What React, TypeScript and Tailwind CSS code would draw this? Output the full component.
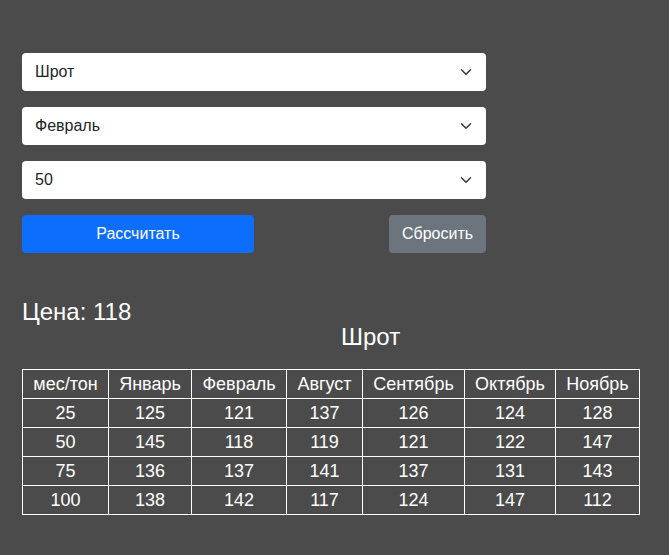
const rows = [
  ["25", "125", "121", "137", "126", "124", "128"],
  ["50", "145", "118", "119", "121", "122", "147"],
  ["75", "136", "137", "141", "137", "131", "143"],
  ["100", "138", "142", "117", "124", "147", "112"],
];

const head = ["мес/тон", "Январь", "Февраль", "Август", "Сентябрь", "Октябрь", "Ноябрь"];
const widths = ["w-[86px]", "w-[83px]", "w-[95px]", "w-[76px]", "w-[102px]", "w-[91px]", "w-[84px]"];

function Select({ value }: { value: string }) {
  return (
    <div className="relative flex h-[38px] w-[464px] items-center rounded-[4px] bg-white pl-[13px] text-[16px] text-[#212529]">
      {value}
      <svg
        className="absolute right-[12px] top-[13px]"
        width="16"
        height="12"
        viewBox="0 0 16 16"
        fill="none"
        stroke="#343a40"
        strokeWidth="2"
        strokeLinecap="round"
        strokeLinejoin="round"
      >
        <path d="m2 5 6 6 6-6" />
      </svg>
    </div>
  );
}

export default function App() {
  return (
    <div className="min-h-[555px] bg-[#4b4b4b] px-[22px] pt-[53px] text-white font-['Liberation_Sans',Arial,sans-serif]">
      <div className="flex flex-col gap-[16px]">
        <Select value="Шрот" />
        <Select value="Февраль" />
        <Select value="50" />
        <div className="flex w-[464px] justify-between">
          <button className="h-[38px] w-[232px] rounded-[4px] bg-[#0d6efd] text-[16px] text-white">
            Рассчитать
          </button>
          <button className="h-[38px] w-[97px] rounded-[4px] bg-[#6c757d] text-[16px] text-white">
            Сбросить
          </button>
        </div>
      </div>
      <div className="mt-[44px] text-[24px] leading-[29px]">Цена: 118</div>
      <div className="-mt-[4px] pl-[319px] text-[24px] leading-[29px]">Шрот</div>
      <table className="mt-[18px] border-collapse text-[18px] leading-[20px]">
        <thead>
          <tr>
            {head.map((h, i) => (
              <th key={h} className={`${widths[i]} h-[29px] border border-white p-0 text-center font-normal`}>
                {h}
              </th>
            ))}
          </tr>
        </thead>
        <tbody>
          {rows.map((r) => (
            <tr key={r[0]}>
              {r.map((c, i) => (
                <td key={i} className="h-[29px] border border-white p-0 text-center">
                  {c}
                </td>
              ))}
            </tr>
          ))}
        </tbody>
      </table>
    </div>
  );
}
